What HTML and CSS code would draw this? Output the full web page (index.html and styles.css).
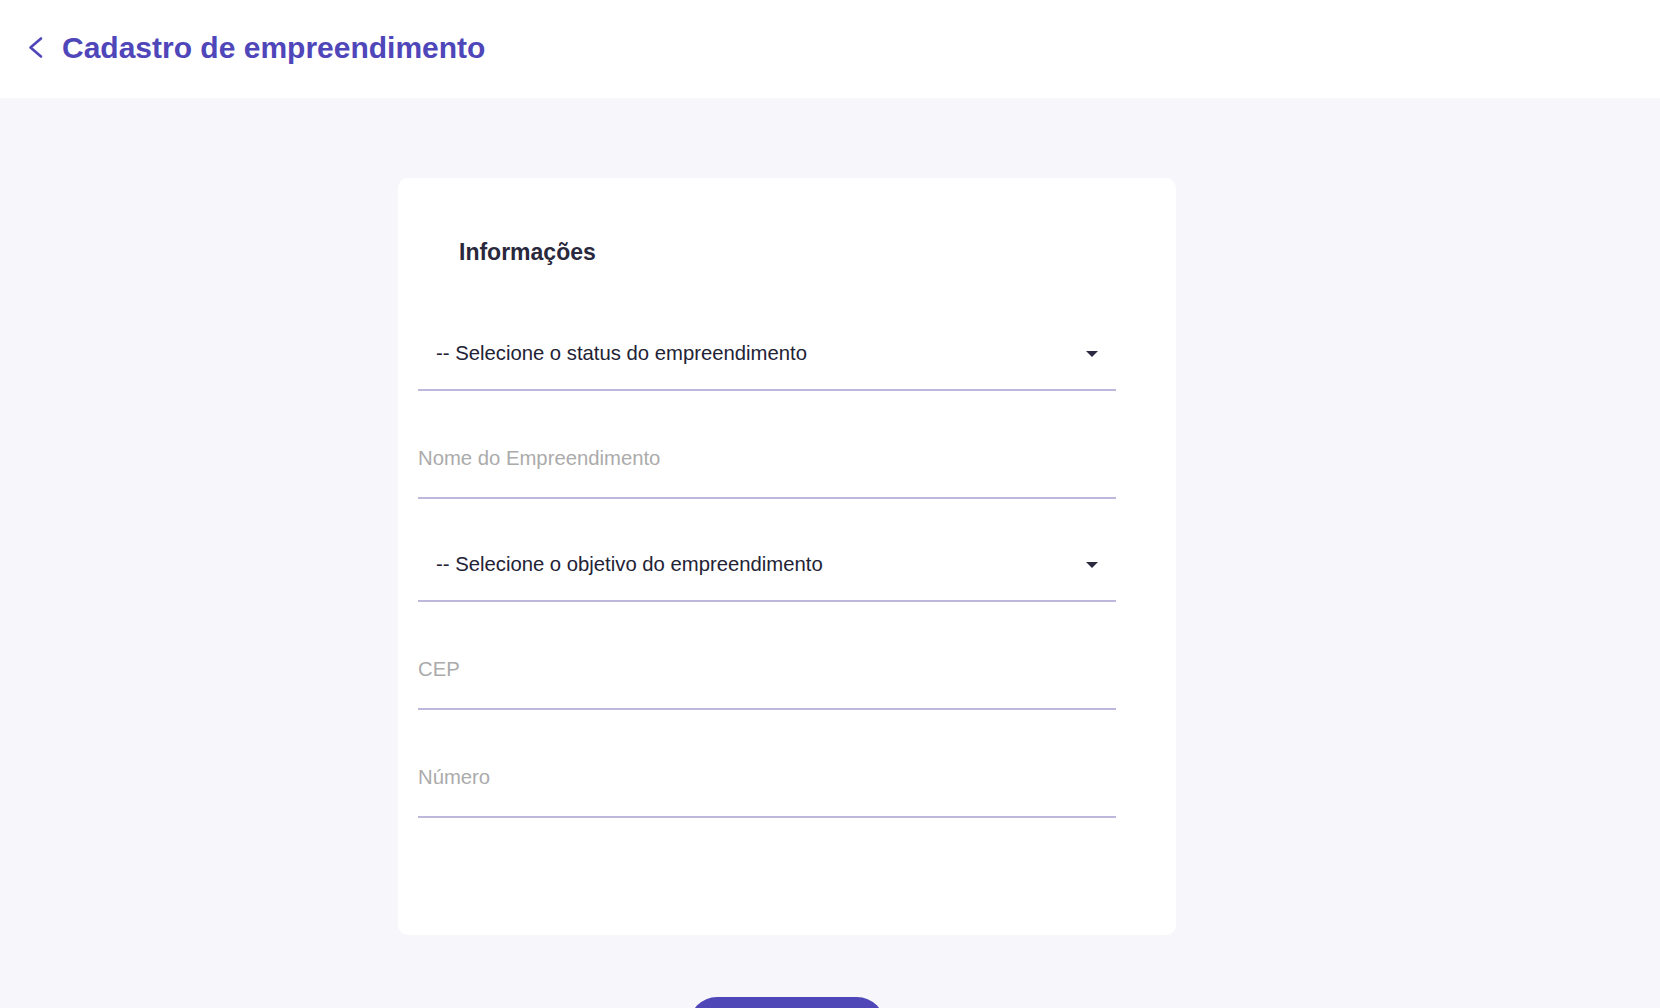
FILE: index.html
```html
<!DOCTYPE html>
<html lang="pt-BR">
<head>
<meta charset="utf-8">
<title>Cadastro de empreendimento</title>
<link rel="stylesheet" href="styles.css">
</head>
<body>
<header class="topbar">
  <a class="back" href="#" aria-label="Voltar">
    <svg width="16" height="24" viewBox="0 0 16 24" aria-hidden="true"><polyline points="13,2.5 2.5,11.5 13,20.5" fill="none" stroke="#4f46ba" stroke-width="2.6" stroke-linecap="round" stroke-linejoin="round"/></svg>
  </a>
  <h1 class="title">Cadastro de empreendimento</h1>
</header>
<main class="content">
  <section class="card">
    <h2 class="card-title">Informações</h2>
    <form class="form">
      <div class="field select-field">
        <select class="control select" aria-label="Status">
          <option>-- Selecione o status do empreendimento</option>
        </select>
      </div>
      <div class="field input-field">
        <input class="control input" type="text" placeholder="Nome do Empreendimento">
      </div>
      <div class="field select-field">
        <select class="control select" aria-label="Objetivo">
          <option>-- Selecione o objetivo do empreendimento</option>
        </select>
      </div>
      <div class="field input-field">
        <input class="control input" type="text" placeholder="CEP">
      </div>
      <div class="field input-field">
        <input class="control input" type="text" placeholder="Número">
      </div>
    </form>
  </section>
  <button class="primary" type="button" aria-label="Cadastrar"></button>
</main>
</body>
</html>
```

FILE: styles.css
```css
* { box-sizing: border-box; }
html, body { margin: 0; padding: 0; }
body {
  background: #f7f7fb;
  font-family: "Liberation Sans", Arial, sans-serif;
  color: #25243a;
}
.topbar {
  height: 98px;
  background: #ffffff;
  display: flex;
  align-items: center;
  padding: 0 0 2px 28px;
}
.back {
  display: flex;
  align-items: center;
  width: 34px;
  height: 24px;
}
.back svg { display: block; }
.title {
  margin: 0;
  font-size: 30px;
  line-height: 36px;
  font-weight: 700;
  color: #4f46ba;
}
.content {
  display: flex;
  flex-direction: column;
  align-items: center;
  padding: 80px 0 40px;
}
.card {
  width: 778px;
  background: #ffffff;
  border-radius: 10px;
  padding: 60px 60px 117px 20px;
  margin-left: -86px;
}
.card-title {
  margin: 0 0 49px 41px;
  font-size: 23px;
  line-height: 28px;
  font-weight: 700;
  color: #29283d;
}
.form {
  display: flex;
  flex-direction: column;
  gap: 27px;
}
.field {
  position: relative;
  border-bottom: 2px solid #bdb8dc;
}
.select-field { padding: 26px 0 24px; }
.input-field { padding: 28px 0 27px; }
.control {
  display: block;
  width: 100%;
  border: 0;
  outline: 0;
  background: transparent;
  padding: 0;
  margin: 0;
  height: 24px;
  line-height: 24px;
  font-family: "Liberation Sans", Arial, sans-serif;
  font-size: 20.3px;
}
.select {
  appearance: none;
  -webkit-appearance: none;
  color: #232235;
  padding-left: 18px;
}
.select-field::after {
  content: "";
  position: absolute;
  right: 18px;
  top: 36px;
  border-left: 6.5px solid transparent;
  border-right: 6.5px solid transparent;
  border-top: 6.5px solid #2a2940;
  pointer-events: none;
}
.input { color: #232235; }
.input::placeholder { color: #ababab; }
.primary {
  margin-top: 62px;
  margin-left: -86px;
  width: 196px;
  height: 56px;
  border: 0;
  border-radius: 28px;
  background: #4f46b8;
}
```
